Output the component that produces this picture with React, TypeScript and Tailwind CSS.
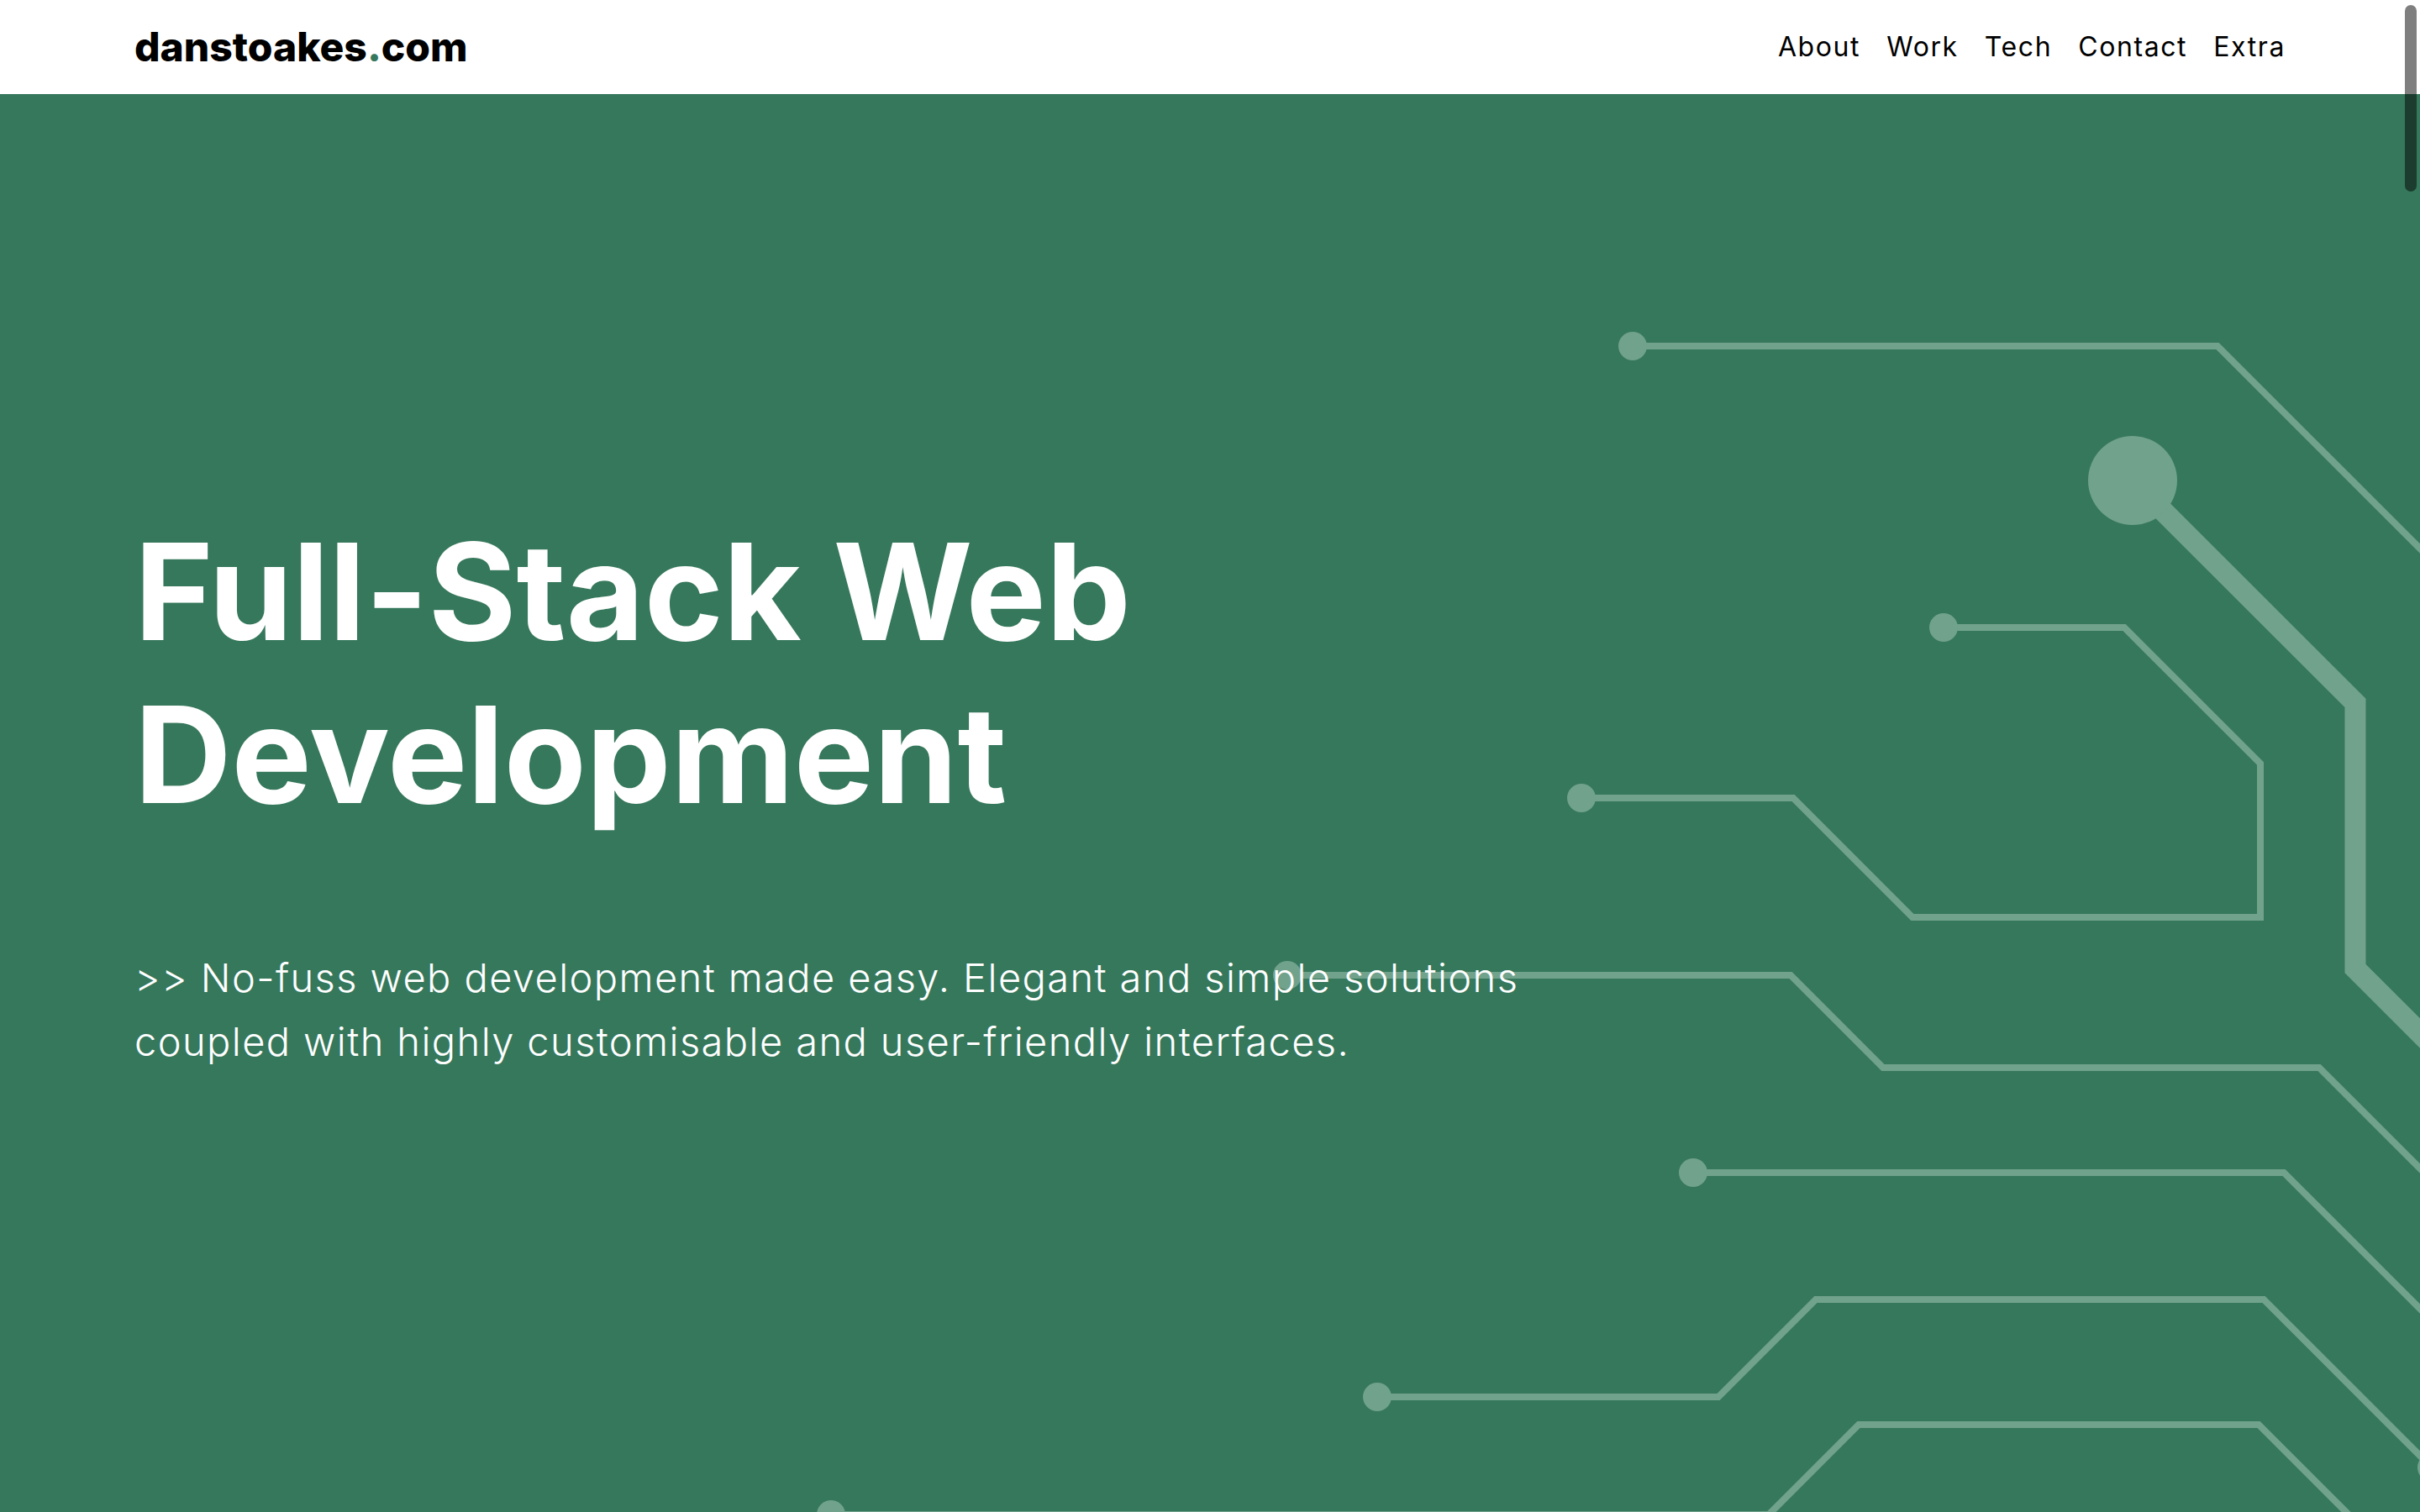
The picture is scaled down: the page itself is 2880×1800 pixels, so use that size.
import React from "react";

const LINE = "#71a28b";

function Circuit() {
  return (
    <svg
      className="absolute inset-0 h-full w-full"
      viewBox="0 112 2880 1688"
      preserveAspectRatio="none"
      aria-hidden="true"
    >
      <g fill="none" stroke={LINE} strokeWidth={8} strokeLinejoin="miter">
        <path d="M1943 412 H2639 L2900 673" />
        <path d="M1882 950 H2134 L2276 1092 H2690 V909 L2528 747 H2313" />
        <path d="M1532 1161 H2131 L2241 1271 H2760 L2900 1411" />
        <path d="M2015 1396 H2718 L2900 1578" />
        <path d="M1639 1663 H2045 L2161 1547 H2694 L2894 1747" />
        <path d="M989 1803 H2105 L2212 1696 H2688 L2900 1908" />
        <path d="M2538 572 L2803 837 V1153 L2900 1250" strokeWidth={25} />
      </g>
      <g fill={LINE}>
        <circle cx={1943} cy={412} r={17} />
        <circle cx={2538} cy={572} r={53} />
        <circle cx={1882} cy={950} r={17} />
        <circle cx={2313} cy={747} r={17} />
        <circle cx={1532} cy={1161} r={17} />
        <circle cx={2015} cy={1396} r={17} />
        <circle cx={1639} cy={1663} r={17} />
        <circle cx={2894} cy={1747} r={17} />
        <circle cx={989} cy={1803} r={17} />
      </g>
    </svg>
  );
}

export default function App() {
  const links = ["About", "Work", "Tech", "Contact", "Extra"];
  return (
    <div className="relative min-h-screen w-full overflow-hidden bg-[#36785c] font-['Inter',sans-serif]">
      <header className="relative z-10 flex h-[112px] items-center justify-between bg-white px-[160px]">
        <a className="text-[48px] font-extrabold leading-none text-black">
          danstoakes<span className="text-[#36785c]">.</span>com
        </a>
        <nav className="flex items-center gap-[31px]">
          {links.map((l) => (
            <a key={l} className="text-[32px] font-normal tracking-[0.05em] text-black">
              {l}
            </a>
          ))}
        </nav>
      </header>

      <section className="relative h-[1688px] w-full">
        <Circuit />
        <div className="relative z-10 flex flex-col pl-[160px] pt-[495px]">
          <h1 className="text-[160px] font-bold leading-[194px] text-white">
            Full-Stack Web
            <br />
            Development
          </h1>
          <p className="mt-[131px] text-[47px] font-light leading-[76px] tracking-[0.03em] text-white">
            &gt;&gt; No-fuss web development made easy. Elegant and simple solutions
            <br />
            coupled with highly customisable and user-friendly interfaces.
          </p>
        </div>
      </section>

      <div className="pointer-events-none absolute right-[4px] top-[6px] z-20 h-[222px] w-[14px] rounded-full bg-black/50" />
    </div>
  );
}
